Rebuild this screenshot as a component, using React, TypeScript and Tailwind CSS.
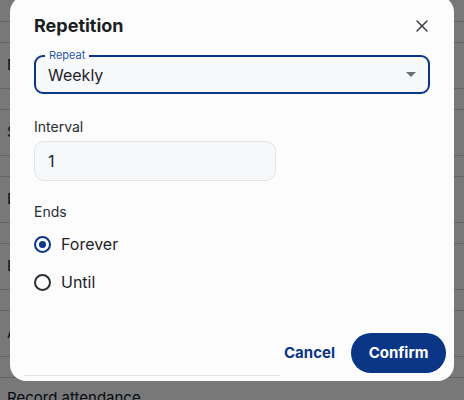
import React from 'react';
import { X } from 'lucide-react';

const rows = ['Due date', 'Start time', 'Duration', 'Location', 'Attendees'];

function BackgroundPage() {
  return (
    <div className="pt-[21px] text-[15px] text-gray-900">
      {rows.map((r) => (
        <div key={r}>
          <div className="h-[22px] border-t border-b border-gray-300" />
          <div className="h-[45px] flex items-center pl-[7px]">{r}</div>
        </div>
      ))}
      <div className="h-[22px] border-t border-b border-gray-300" />
      <div className="pl-[7px] pt-[9px]">Record attendance</div>
    </div>
  );
}

function Radio({ checked, label }: { checked: boolean; label: string }) {
  return (
    <label className="flex items-center gap-[10px] h-[38px]">
      <span
        className={
          checked
            ? 'w-[17px] h-[17px] rounded-full border-2 border-[#0b3585] flex items-center justify-center'
            : 'w-[17px] h-[17px] rounded-full border-2 border-[#2a2d33]'
        }
      >
        {checked && <span className="w-[7px] h-[7px] rounded-full bg-[#0b3585]" />}
      </span>
      <span className="text-[16px] text-[#1f2329]">{label}</span>
    </label>
  );
}

export default function App() {
  return (
    <div
      className="relative w-[464px] h-[400px] overflow-hidden bg-white"
      style={{ fontFamily: 'Inter, "Noto Sans", sans-serif' }}
    >
      <BackgroundPage />
      <div className="absolute inset-0 bg-black/[0.53]" />

      <div className="absolute left-[10px] top-[-4px] w-[444px] h-[385px] rounded-[16px] bg-[#fcfcfc] flex flex-col pl-[24px] pr-[8px]">
        <div className="flex items-center justify-between pt-[16px] pr-[14px]">
          <h2 className="text-[18px] leading-[28px] font-bold text-[#1b1f24]">Repetition</h2>
          <X size={20} strokeWidth={1.75} className="text-[#3b3f45]" />
        </div>

        <div className="mt-[15px] mr-[16px] relative h-[39px] rounded-[9px] border-2 border-[#0b3585] bg-[#f7f8fa] flex items-center justify-between pl-[12px] pr-[12px]">
          <span className="absolute left-[9px] top-[-9px] px-[4px] bg-[#fcfcfc] text-[11px] leading-[14px] text-[#2c58a6]">
            Repeat
          </span>
          <span className="text-[16px] text-[#1f2329]">Weekly</span>
          <span className="w-0 h-0 border-l-[5px] border-r-[5px] border-t-[5px] border-l-transparent border-r-transparent border-t-[#6b6f75]" />
        </div>

        <div className="mt-[23px] text-[14px] leading-[20px] text-[#2a2d33]">Interval</div>
        <div className="mt-[4px] w-[242px] h-[40px] rounded-[10px] border border-[#e2e4e8] bg-[#f7f8fa] flex items-center pl-[13px] text-[16px] text-[#1f2329]">
          1
        </div>

        <div className="mt-[21px] text-[14px] leading-[20px] text-[#2a2d33]">Ends</div>
        <div className="mt-[3px] flex flex-col">
          <Radio checked label="Forever" />
          <Radio checked={false} label="Until" />
        </div>

        <div className="flex-1" />
        <div className="flex items-center justify-end gap-[16px] pb-[2px]">
          <button className="text-[15px] font-bold text-[#0b3585]">Cancel</button>
          <button className="h-[40px] w-[95px] rounded-full bg-[#0b3585] text-white text-[15px] font-bold">
            Confirm
          </button>
        </div>
        <div className="h-px w-[256px] ml-[-10px] bg-[#e3e3e3]" />
        <div className="h-[5px]" />
      </div>
    </div>
  );
}
